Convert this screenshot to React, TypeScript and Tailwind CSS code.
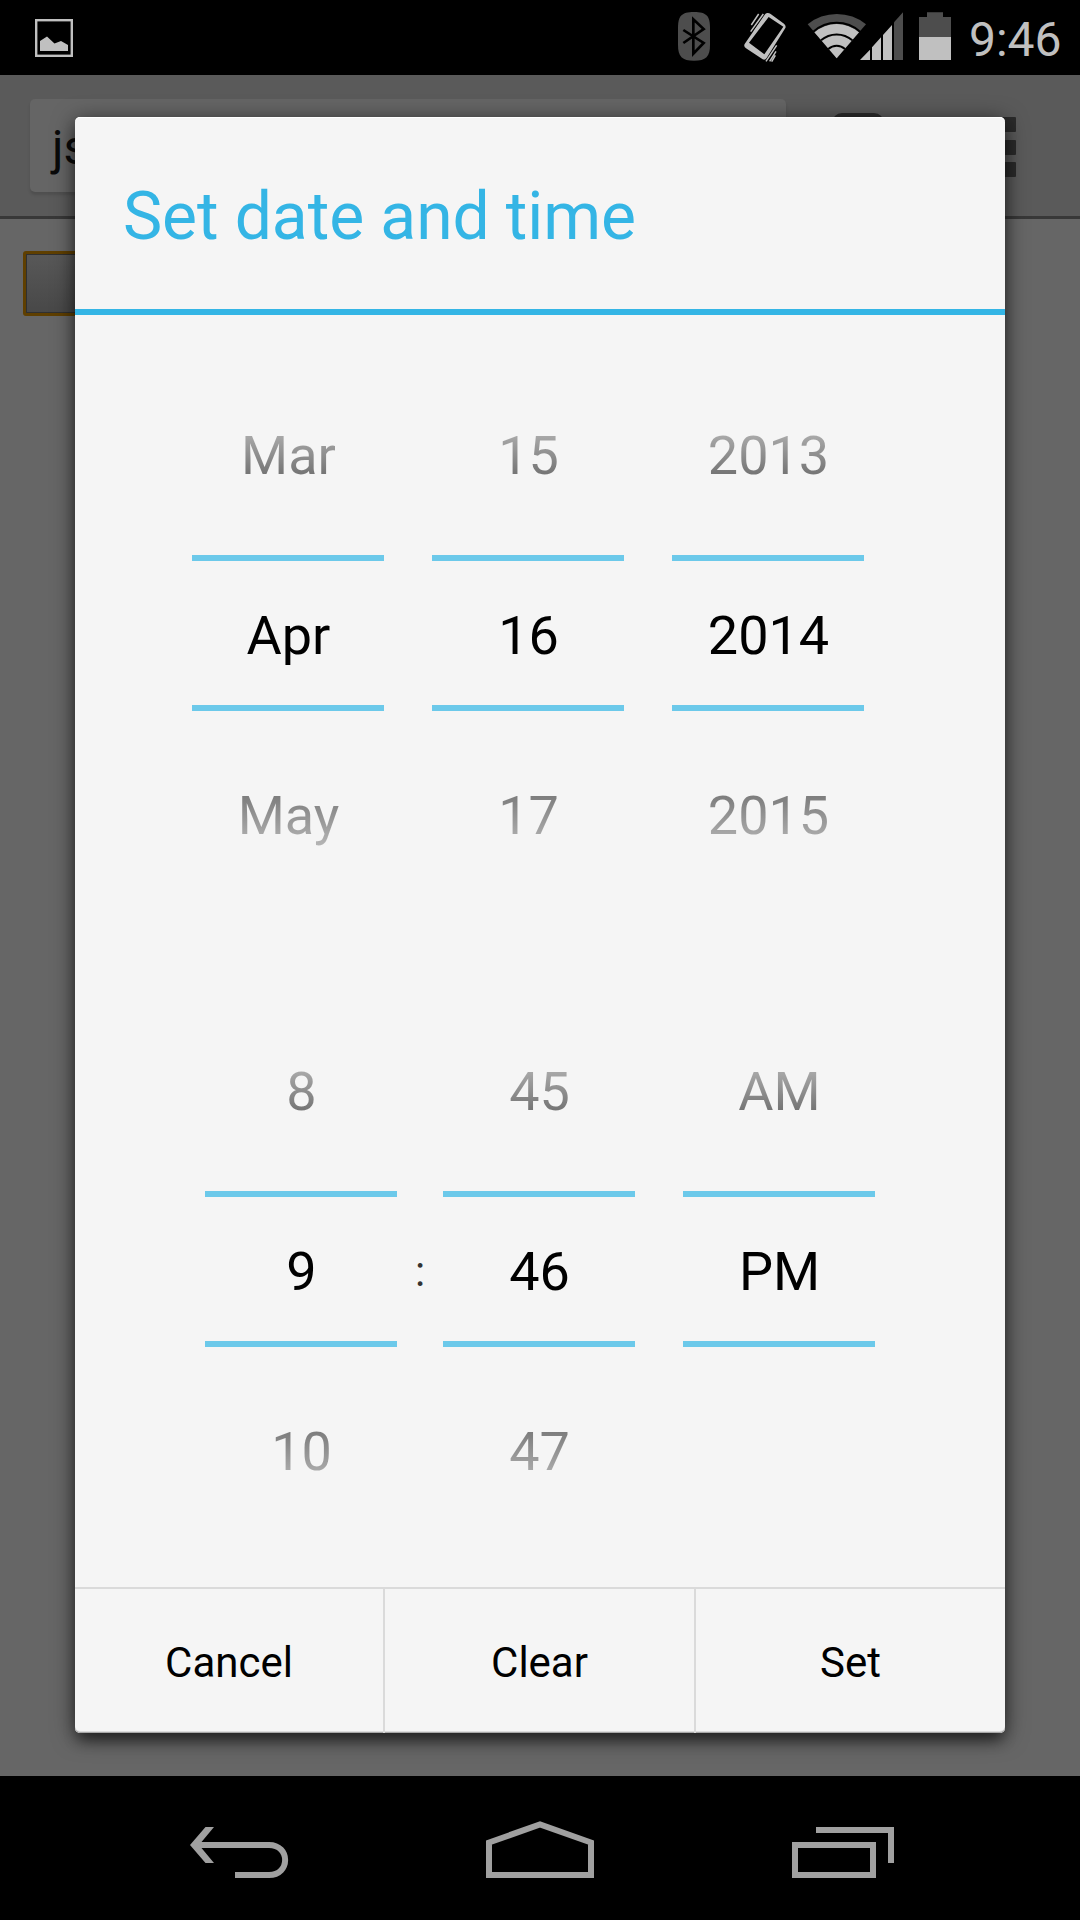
import React from "react";

function PictureIcon() {
  return (
    <svg width="38" height="38" viewBox="0 0 38 38" className="shrink-0">
      <rect x="1.2" y="1.2" width="35.6" height="35.6" fill="none" stroke="#c0c0c0" strokeWidth="2.4" />
      <path d="M5 32V22L12 17.5L19.5 24.5L26 22L33 26V32Z" fill="#c0c0c0" />
    </svg>
  );
}

function BluetoothIcon() {
  return (
    <svg width="36" height="75" viewBox="48 0 108 225" className="shrink-0">
      <path d="M102 36C140 36 150 48 150 85V134C150 170 138 182 102 182S54 170 54 134V85C54 48 64 36 102 36Z" fill="#4d4d4d" />
      <path d="M70 90L131 129L100 161V58L131 87L70 129" fill="none" stroke="#000" strokeWidth="8" />
    </svg>
  );
}

function VibrateIcon() {
  return (
    <svg width="46" height="75" viewBox="246 0 138 225" className="shrink-0">
      <path
        fillRule="evenodd"
        fill="#c0c0c0"
        d="M321 39Q327 38 332 42L372 71Q379 77 376 84L320 174Q315 182 308 178L258 145Q250 139 254 132L313 46Q316 40 321 39ZM326 51L267 128L313 163L370 80Z"
      />
      <path d="M296 42L274 75M310 42L272 95M318 47L283 94M350 136L318 184M348 154L329 184M346 166L335 185" stroke="#c0c0c0" strokeWidth="4.5" fill="none" />
    </svg>
  );
}

function SignalIcons() {
  return (
    <svg width="98" height="75" viewBox="438 0 294 225" className="shrink-0">
      <path d="M530 175L443 73A138 138 0 0 1 618 73Z" fill="#4d4d4d" />
      <path d="M530 175L463 97A103 103 0 0 1 597 97Z" fill="#c0c0c0" />
      <path d="M460 95A105 105 0 0 1 600 95M483 121A71 71 0 0 1 577 121M505 147A37 37 0 0 1 555 147" stroke="#000" strokeWidth="6" fill="none" />
      <path d="M600 180L630 149V180ZM636 180V142L663 112V180ZM669 180V105L696 75V180Z" fill="#c0c0c0" />
      <path d="M702 180V67L729 37V180Z" fill="#4d4d4d" />
    </svg>
  );
}

function BatteryIcon() {
  return (
    <svg width="34" height="75" viewBox="774 0 102 225" className="shrink-0">
      <path d="M777 111V51H801V37H849V51H873V111Z" fill="#4d4d4d" />
      <rect x="777" y="111" width="96" height="69" fill="#c0c0c0" />
    </svg>
  );
}

function StatusBar() {
  return (
    <header className="flex h-[75px] items-center bg-black pl-[35px] pr-[17px]">
      <PictureIcon />
      <div className="ml-auto flex items-center">
        <BluetoothIcon />
        <div className="w-[30px]" />
        <VibrateIcon />
        <div className="w-[18px]" />
        <SignalIcons />
        <div className="w-[14px]" />
        <BatteryIcon />
        <span className="ml-[17px] w-[94px] whitespace-nowrap pt-1 text-[48px] leading-[75px] text-[#c0c0c0]">9:46</span>
      </div>
    </header>
  );
}

function BrowserPage() {
  return (
    <main className="h-[1701px] overflow-hidden bg-[#666666]">
      <div className="flex h-[144px] items-start border-b-[3px] border-[#383838] bg-[#5a5a5a] pl-[30px] pt-[24px]">
        <div className="h-[93px] w-[756px] rounded-[5px] bg-[#656565] pl-[22px] pt-[3px] text-[48px] leading-[92px] text-[#0a0a0a] shadow-[0_3px_3px_rgba(0,0,0,0.13)]">
          js
        </div>
        <div className="ml-[46px] mt-[14px] h-12 w-[52px] rounded-[10px] bg-[#2b2b2b]" />
        <div className="ml-[117px] mt-[18px] flex flex-col gap-[7.5px]">
          <div className="h-[15px] w-[15px] rounded-[1px] bg-[#2b2b2b]" />
          <div className="h-[15px] w-[15px] rounded-[1px] bg-[#2b2b2b]" />
          <div className="h-[15px] w-[15px] rounded-[1px] bg-[#2b2b2b]" />
        </div>
      </div>
      <div className="ml-[23px] mt-[32px] h-[65px] w-[300px] rounded-[3px] border-[3px] border-[#5f3f00]">
        <div className="h-full border border-[#303030] bg-linear-to-b from-[#585858] to-[#484848]" />
      </div>
    </main>
  );
}

type WheelProps = { before: string; value: string; after: string };

function Wheel({ before, value, after }: WheelProps) {
  return (
    <div className="flex w-[192px] flex-col text-center text-[54px]">
      <div className="h-[180px] bg-[linear-gradient(to_bottom,#a9a9a9_69px,#757575_108px)] bg-clip-text pl-px leading-[180px] text-transparent">{before}</div>
      <div className="mt-[9px] h-[156px] border-y-[6px] border-[#6cc9ea] pl-px pt-[5px] leading-[139px] text-black">{value}</div>
      <div className="mt-[15px] h-[180px] bg-[linear-gradient(to_bottom,#7b7b7b_68px,#b5b5b5_120px)] bg-clip-text pl-px leading-[180px] text-transparent">{after}</div>
    </div>
  );
}

function Dialog() {
  return (
    <section className="absolute left-[75px] top-[117px] flex h-[1616px] w-[930px] flex-col rounded-[5px] bg-[#f5f5f5] shadow-[0_10px_14px_-3px_rgba(0,0,0,0.4),0_4px_22px_rgba(0,0,0,0.6),inset_0_1px_0_#ffffff,inset_0_-1px_0_#a8a8a8,inset_0_-2px_0_#dcdcdc]">
      <h1 className="h-[198px] border-b-[6px] border-[#34b5e5] pl-[48px] pt-[7px] text-[66px] leading-[185px] tracking-[-0.1px] text-[#34b5e5]">Set date and time</h1>
      <div className="ml-[117px] mt-[51px] flex gap-[48px]">
        <Wheel before="Mar" value="Apr" after="May" />
        <Wheel before="15" value="16" after="17" />
        <Wheel before="2013" value="2014" after="2015" />
      </div>
      <div className="ml-[130px] mt-[96px] flex">
        <Wheel before="8" value="9" after="10" />
        <div className="w-[46px] pt-[189px] text-center text-[42px] leading-[162px] text-[#333333]">:</div>
        <Wheel before="45" value="46" after="47" />
        <div className="w-[48px]" />
        <Wheel before="AM" value="PM" after="" />
      </div>
      <footer className="mt-auto flex h-[146px] border-t-2 border-[#dadada] text-center text-[42px] leading-[147px] text-black">
        <button className="w-[308px]">Cancel</button>
        <button className="w-[313px] border-x-2 border-[#dadada]">Clear</button>
        <button className="flex-1">Set</button>
      </footer>
    </section>
  );
}

function NavigationBar() {
  return (
    <nav className="flex h-[144px] items-center bg-black pl-[189px] pt-[6px]">
      <svg width="102" height="60" viewBox="0 0 102 60" fill="none" stroke="#a0a0a0" strokeWidth="6">
        <path d="M10 24H80C101.500 24 101.500 54 80 54H46" />
        <path d="M1 24L16.500 6H25L10 24L25 42H16.500Z" fill="#a0a0a0" stroke="none" />
      </svg>
      <svg className="ml-[195px]" width="108" height="60" viewBox="0 0 108 60" fill="none" stroke="#a0a0a0" strokeWidth="6">
        <path d="M3 54V21.500L54 3.500L105 21.500V54Z" />
      </svg>
      <svg className="ml-[198px]" width="102" height="60" viewBox="0 0 102 60" fill="none" stroke="#a0a0a0" strokeWidth="6">
        <path d="M3 24H81V54H3ZM24 9H99V42" />
      </svg>
    </nav>
  );
}

export default function App() {
  return (
    <div className="relative h-[1920px] w-[1080px] overflow-hidden bg-black font-[Roboto,sans-serif]">
      <StatusBar />
      <BrowserPage />
      <Dialog />
      <NavigationBar />
    </div>
  );
}
